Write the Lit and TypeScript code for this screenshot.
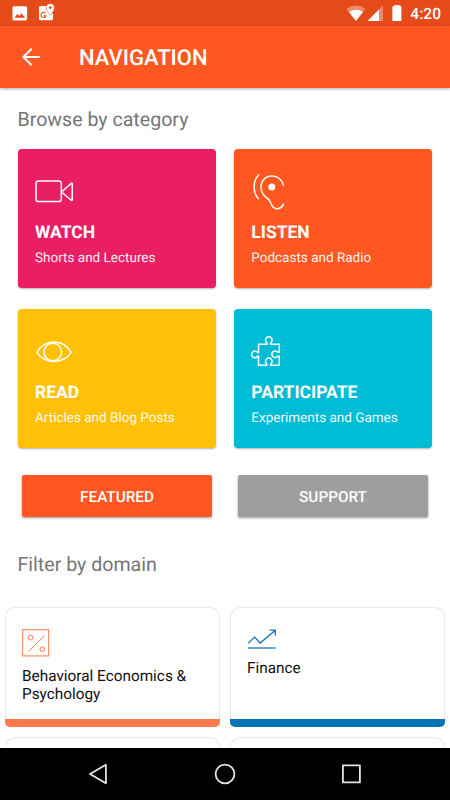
import { LitElement, html, css, svg } from "lit";
import { customElement } from "lit/decorators.js";
import { styleMap } from "lit/directives/style-map.js";

const watchIcon = svg`<rect x="1" y="15" width="25.3" height="20.6" rx="2.6"/><path d="M26.6 26 36.2 17.4Q37.2 16.7 37.2 18V33.6Q37.2 35 36.2 34.2Z"/>`;
const listenIcon = svg`<path d="M7.8 8.8C1.8 14.5 1.4 26 7.4 32.8" /><path d="M32.4 19.4C31.2 13.5 26.4 10 21 10C14.4 10 10 15 10 21C10 27.4 13.6 30.2 17 32.8C20.6 35.8 19.6 38.6 22 41C25.2 44 31 43 32.4 38"/><circle cx="20.8" cy="21" r="3.5" fill="#fff" stroke="none"/>`;
const readIcon = svg`<path d="M1.8 26.4C5.5 20 11.6 16 19 16S32.5 20 36.2 26.4C32.5 32 26.4 35.4 19 35.4S5.5 32 1.8 26.4Z"/><circle cx="17.8" cy="26" r="8.8"/>`;
const puzzleIcon = svg`<path d="M7.5 18.2H15.9V16.8A3.3 3.3 0 1 1 19.7 16.8V18.2H28.3V26.3H26.8A3.3 3.3 0 1 0 26.8 30.3H28.3V39.2H19.8V38A3.3 3.3 0 1 0 15.8 38V39.2H7.5V30.3H6.6A3.3 3.3 0 1 1 6.6 26.5H7.5Z"/>`;

const tiles = [
  { title: "WATCH", sub: "Shorts and Lectures", color: "#e91e63", icon: watchIcon },
  { title: "LISTEN", sub: "Podcasts and Radio", color: "#ff5722", icon: listenIcon },
  { title: "READ", sub: "Articles and Blog Posts", color: "#ffc107", icon: readIcon },
  { title: "PARTICIPATE", sub: "Experiments and Games", color: "#00bcd4", icon: puzzleIcon },
];

const percentIcon = html`<svg width="28" height="28" viewBox="0 0 28 28" fill="none" stroke="#ff7850" stroke-width="1">
  <rect x=".7" y=".7" width="26" height="26.2"/><path d="M6.5 22.4 22.8 6.6"/><circle cx="8.5" cy="8.6" r="2.4"/><circle cx="20.4" cy="20.2" r="2.4"/></svg>`;
const chartIcon = html`<svg width="29" height="20" viewBox="0 0 29 20" fill="none" stroke="#1b73b7" stroke-width="1.3">
  <path d="M1.2 14.4 7.6 8.1 13.2 14 28 1.6M22.6 1.2H28.3V6.6"/><path d="M.8 19H28.6"/></svg>`;

@customElement("app-root")
export class AppRoot extends LitElement {
  static styles = css`
    :host { display: flex; flex-direction: column; width: 450px; height: 800px; overflow: hidden; background: #fff; font-family: Roboto, sans-serif; text-rendering: geometricPrecision; }
    * { box-sizing: border-box; }
    svg { display: block; flex: none; }
    .status { height: 26px; flex: none; background: #e64a19; color: #fff; display: flex; align-items: center; justify-content: space-between; padding: 0 9px 0 12px; }
    .left, .right { display: flex; align-items: center; }
    .time { font-size: 15.6px; font-weight: 500; line-height: 26px; margin-left: 8px; padding-top: 2px; }
    .bar { height: 61.5px; flex: none; background: #ff5722; color: #fff; display: flex; align-items: center; padding-left: 21px; gap: 38px; box-shadow: 0 1px 3px rgba(0, 40, 60, .38); z-index: 1; }
    .bar h1 { margin: 4.5px 0 0; font-size: 22px; font-weight: 500; line-height: 30px; }
    .main { flex: 1; min-height: 0; overflow: hidden; }
    h2 { margin: 0; padding-left: 17.5px; font-size: 19.6px; font-weight: 400; color: #757575; line-height: 24px; }
    .browse { margin-top: 20.5px; }
    .grid { display: grid; grid-template-columns: 198.5px 198.5px; gap: 21.5px 17.8px; padding: 17px 17.5px 0; }
    .tile { height: 138.5px; border-radius: 4px; padding: 16.5px 17.5px; color: #fff; box-shadow: 0 1px 2px rgba(0, 0, 0, .3); }
    .name { font-size: 17.5px; font-weight: 700; line-height: 22px; margin-top: 12px; }
    .sub { font-size: 13.5px; line-height: 18px; margin-top: 5.5px; opacity: .92; }
    .buttons { display: flex; gap: 26px; padding: 27.5px 22px 0; }
    .btn { width: 190.3px; height: 42px; border-radius: 2px; background: #ff5722; color: #fff; font-size: 15.3px; font-weight: 500; line-height: 44px; text-align: center; box-shadow: 0 1px 2.5px rgba(0, 0, 0, .4); }
    .support { background: #9e9e9e; }
    .filter { margin-top: 36px; }
    .domains { display: grid; grid-template-columns: 215px 215px; gap: 10px; padding: 30px 5px 0; }
    .card { height: 120px; display: flex; flex-direction: column; }
    .body { flex: 1; border: 1px solid #e9e9e9; border-bottom: 0; border-radius: 10px 10px 0 0; padding: 20.5px 16px 0; display: flex; flex-direction: column; gap: 10.5px; }
    .strip { height: 8.5px; border-radius: 0 0 5px 5px; }
    .label { font-size: 15.35px; line-height: 18.1px; color: #111; }
    .nav { height: 52px; flex: none; background: #000; display: flex; align-items: center; justify-content: center; gap: 103px; }
  `;

  render() {
    return html`
      <div class="status">
        <div class="left">
          <svg width="44" height="20" viewBox="0 0 44 20">
            <rect x=".5" y="3.3" width="14.6" height="14.2" rx="1.4" fill="#fff"/>
            <path d="M2.5 14.7 5.5 11.1 7.3 13 9.5 10.2 13 14.7Z" fill="#e64a19"/>
            <path d="M28.4 3H35L38 12 41 10V15.8A1.5 1.5 0 0 1 39.5 17.3H28.4A1.5 1.5 0 0 1 27 15.8V4.5A1.5 1.5 0 0 1 28.4 3Z" fill="#fff"/>
            <path d="M33.6 10.3A2.6 2.6 0 1 0 34 12.8H31.6" fill="none" stroke="#e64a19" stroke-width="1.1"/>
            <path d="M38.3 .7A4.1 4.1 0 0 0 34.2 4.8C34.2 8 38.3 12.4 38.3 12.4S42.4 8 42.4 4.8A4.1 4.1 0 0 0 38.3 .7Z" fill="#fff" stroke="#e64a19" stroke-width=".5"/>
            <circle cx="38.3" cy="4.6" r="1.4" fill="#e64a19"/>
          </svg>
        </div>
        <div class="right">
          <svg width="56" height="18" viewBox="0 0 56 18" fill="#fff">
            <path d="M.4 4.9C6.2 .3 13.6 .3 19.4 4.9L9.9 16.8Z" opacity=".35"/>
            <path d="M3 8C7.4 5 12.6 5 17 8L9.9 16.9Z"/>
            <path d="M37 1.6V17H21.5Z" opacity=".35"/><path d="M33 5.6V17H21.5Z"/>
            <path d="M46.4 2.2H48.3V1H53.6V2.2H55.4V16.9H46.4Z"/>
          </svg>
          <span class="time">4:20</span>
        </div>
      </div>
      <div class="bar">
        <svg width="20" height="20" viewBox="0 0 20 20" fill="none" stroke="#fff" stroke-width="2"><path d="M18.8 10H2.4M10.7 1.8 2.4 10 10.7 18.2"/></svg>
        <h1>NAVIGATION</h1>
      </div>
      <div class="main">
        <h2 class="browse">Browse by category</h2>
        <div class="grid">
          ${tiles.map((t) => html`<div class="tile" style=${styleMap({ background: t.color })}>
            <svg width="44" height="44" viewBox="0 0 44 44" fill="none" stroke="#fff" stroke-width="1.5" stroke-linecap="round">${t.icon}</svg>
            <div class="name">${t.title}</div>
            <div class="sub">${t.sub}</div>
          </div>`)}
        </div>
        <div class="buttons">
          <div class="btn">FEATURED</div>
          <div class="btn support">SUPPORT</div>
        </div>
        <h2 class="filter">Filter by domain</h2>
        <div class="domains">
          <div class="card">
            <div class="body">${percentIcon}<div class="label">Behavioral Economics &amp;<br>Psychology</div></div>
            <div class="strip" style=${styleMap({ background: "#ff784e" })}></div>
          </div>
          <div class="card">
            <div class="body">${chartIcon}<div class="label">Finance</div></div>
            <div class="strip" style=${styleMap({ background: "#0873b5" })}></div>
          </div>
          <div class="card"><div class="body"></div></div>
          <div class="card"><div class="body"></div></div>
        </div>
      </div>
      <div class="nav">
        <svg width="24" height="24" viewBox="0 0 24 24" fill="none" stroke="#e4e4e4" stroke-width="1.8" stroke-linejoin="round"><path d="M19.9 2.7V21.3L4 12Z"/></svg>
        <svg width="24" height="24" viewBox="0 0 24 24" fill="none" stroke="#e4e4e4" stroke-width="1.8"><circle cx="12" cy="12" r="9.4"/></svg>
        <svg width="24" height="24" viewBox="0 0 24 24" fill="none" stroke="#e4e4e4" stroke-width="1.8" stroke-linejoin="round"><rect x="2.9" y="3.4" width="17" height="17"/></svg>
      </div>
    `;
  }
}
